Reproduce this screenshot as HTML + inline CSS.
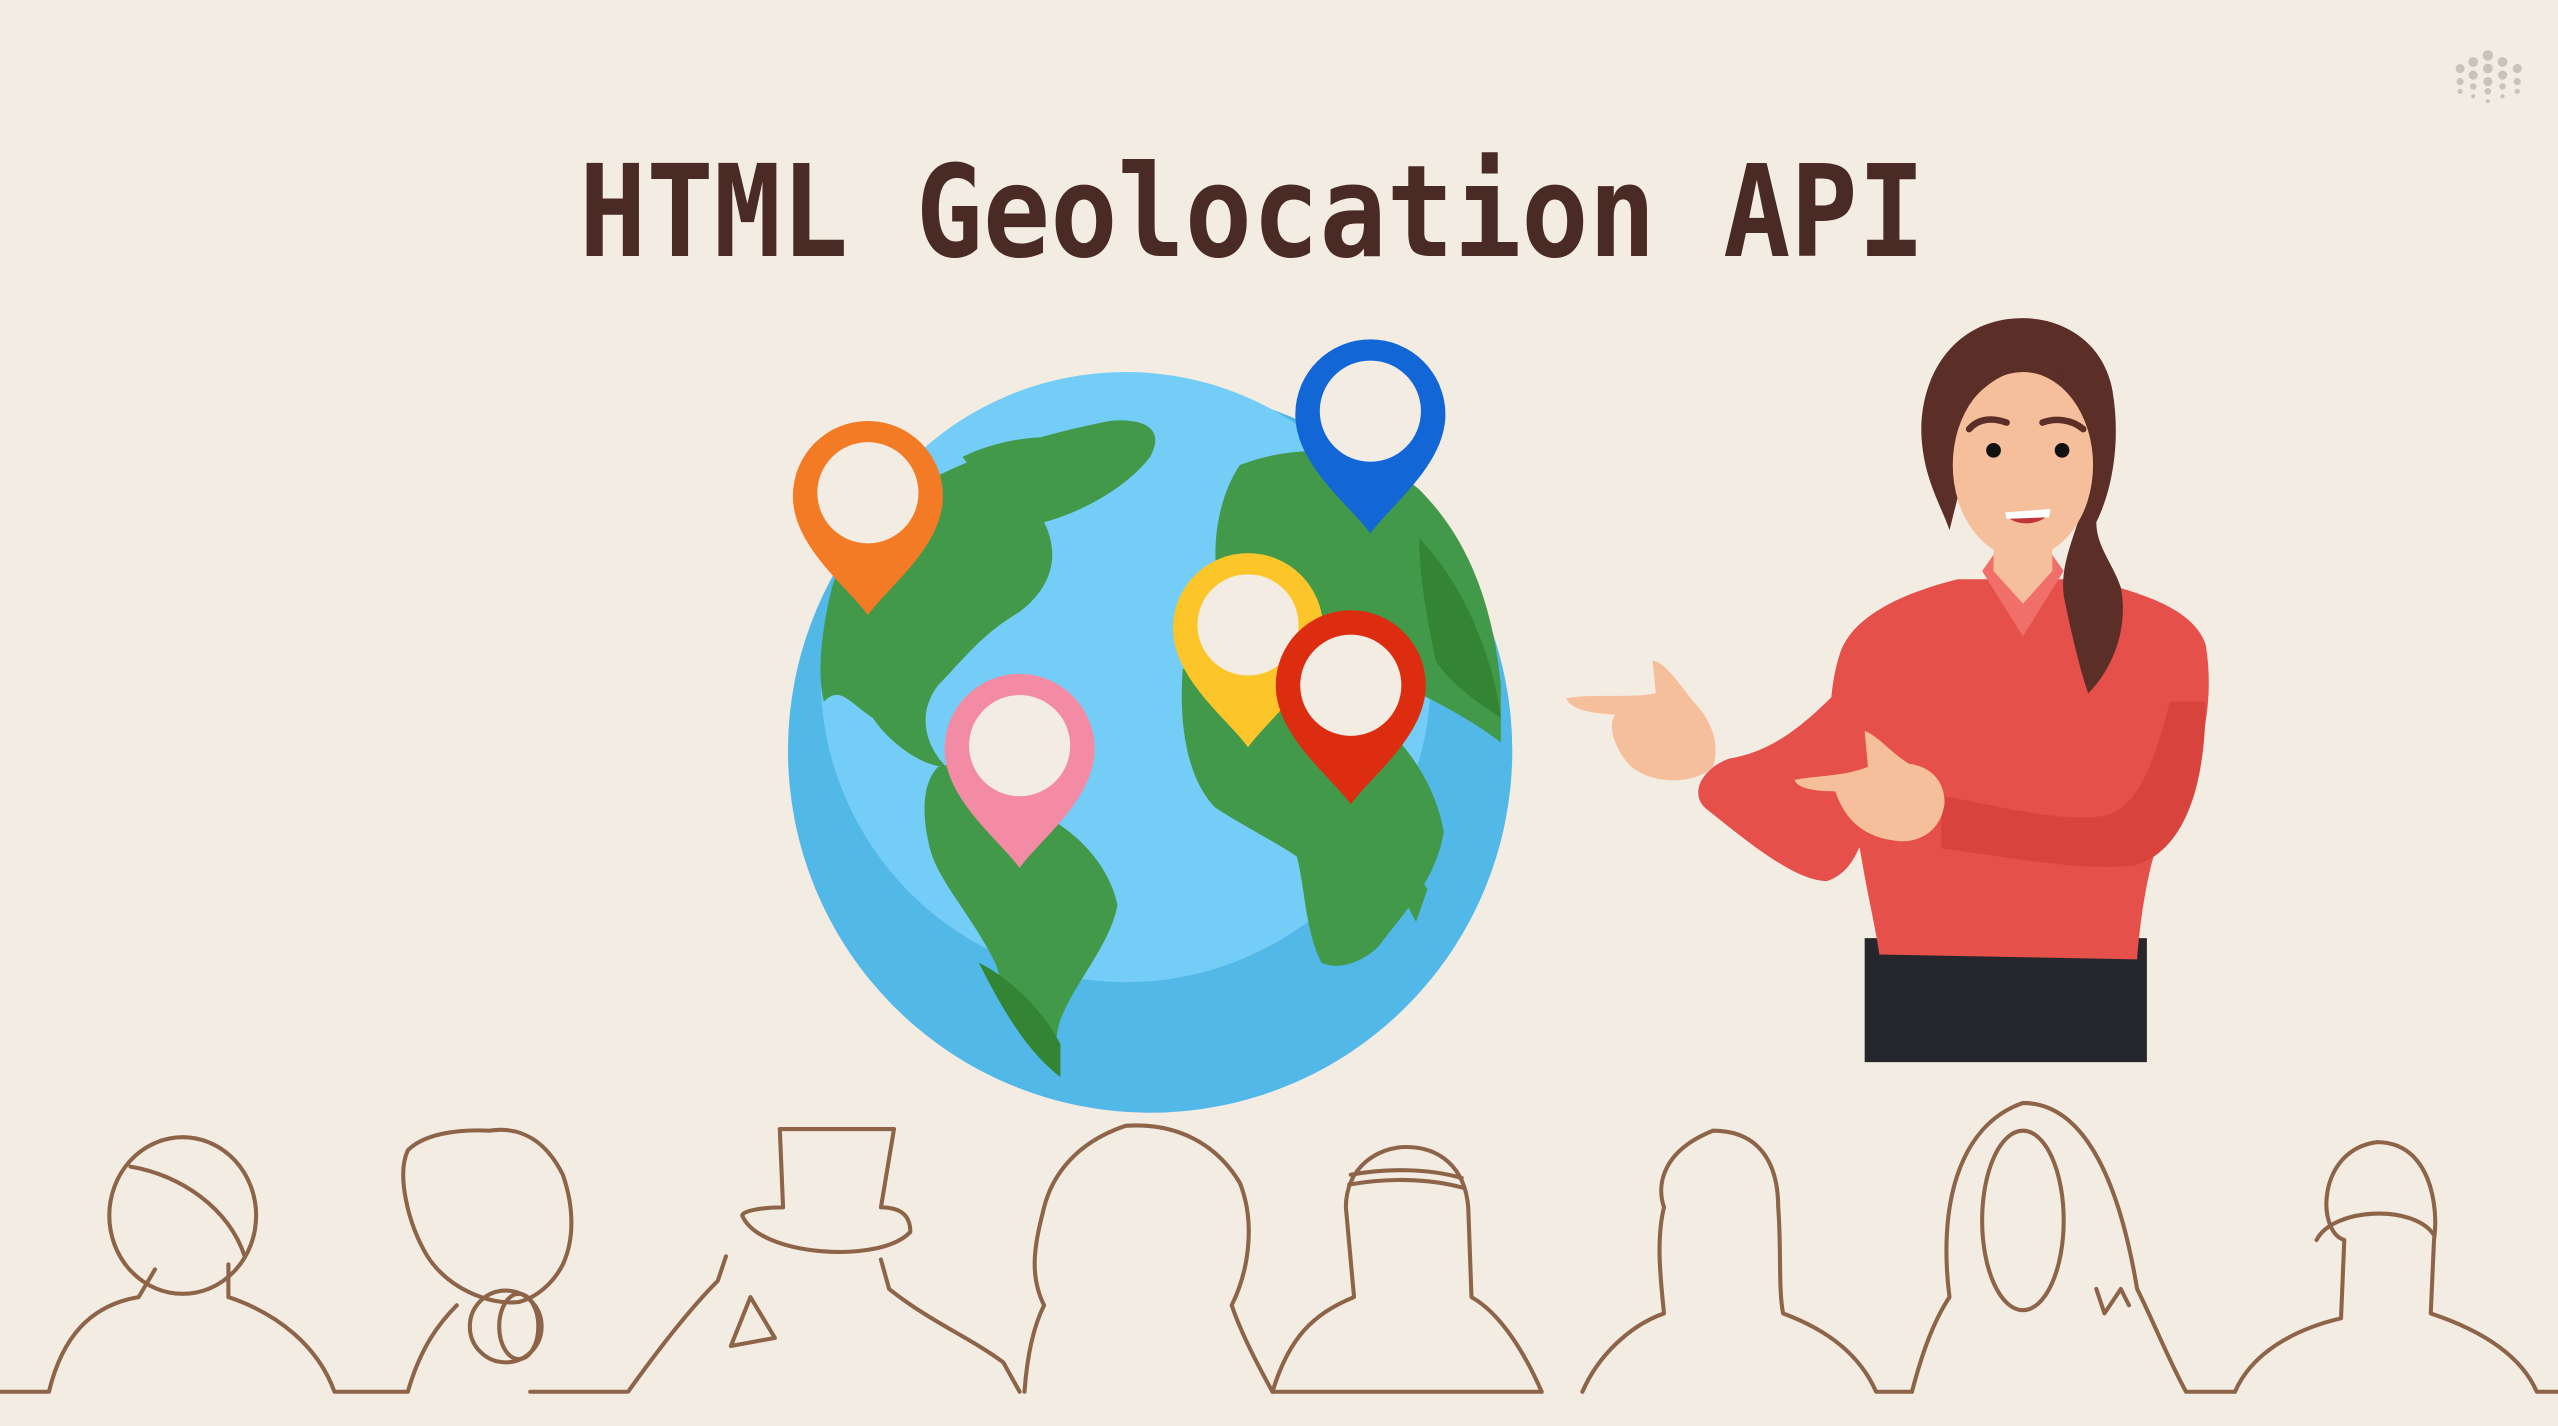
<!DOCTYPE html>
<html><head><meta charset="utf-8"><style>
html,body{margin:0;padding:0;background:#f3ece3;}
svg{display:block;}
</style></head><body>
<svg width="2558" height="1426" viewBox="0 0 1568 874" preserveAspectRatio="none" xmlns="http://www.w3.org/2000/svg">
<rect width="1568" height="874" fill="#f3ece3"/>
<g fill="#c9c3bc">
<circle cx="1525" cy="34" r="3.2"/>
<circle cx="1516" cy="38" r="3"/><circle cx="1534" cy="38" r="3"/>
<circle cx="1508" cy="42" r="2.8"/><circle cx="1525" cy="42" r="3"/><circle cx="1543" cy="42" r="2.8"/>
<circle cx="1516" cy="46" r="2.8"/><circle cx="1534" cy="46" r="2.8"/>
<circle cx="1508" cy="50" r="2.2"/><circle cx="1525" cy="50" r="2.8"/><circle cx="1543" cy="50" r="2.2"/>
<circle cx="1516" cy="53" r="2"/><circle cx="1534" cy="53" r="2"/>
<circle cx="1508" cy="56" r="1.6"/><circle cx="1525" cy="56" r="2"/><circle cx="1543" cy="56" r="1.6"/>
<circle cx="1516" cy="59" r="1.3"/><circle cx="1534" cy="59" r="1.3"/>
<circle cx="1525" cy="62" r="1.2"/>
</g>
<text x="355" y="157" font-family="DejaVu Sans Mono, monospace" font-weight="bold" font-size="78" fill="#4a2a24" textLength="825" lengthAdjust="spacingAndGlyphs">HTML Geolocation API</text>

<circle cx="705" cy="460" r="222" fill="#52b8e8"/>
<circle cx="690" cy="415" r="187" fill="#74cdf6"/>
<g fill="#43994a">
<path d="M520 330 C560 290 620 270 680 258 C700 256 715 262 705 280 C690 300 660 315 640 320 C650 340 645 360 625 375 C600 390 590 405 575 420 C560 440 570 460 580 470 C565 470 545 455 535 440 C520 430 515 420 505 430 C500 410 505 380 510 360 Z"/>
<path d="M575 470 C600 465 620 480 640 500 C660 510 680 530 685 555 C680 580 660 600 650 625 C645 640 648 655 650 660 C635 650 620 620 610 590 C595 560 575 540 570 520 C565 500 565 480 575 470 Z"/>
<path d="M590 280 C610 270 640 265 655 270 C660 285 650 300 635 305 C620 300 600 295 590 280 Z"/>
<path d="M760 285 C800 270 840 275 870 300 C900 330 915 370 920 420 L920 455 C900 440 880 430 860 420 C845 405 830 395 815 395 C800 395 790 390 775 385 C760 380 745 360 745 340 C745 320 750 300 760 285 Z"/>
<path d="M725 410 C760 400 800 410 830 430 C860 450 880 480 885 510 C880 540 860 560 845 580 C835 590 820 595 810 590 C800 570 800 545 795 525 C780 515 760 505 745 495 C730 480 722 450 725 410 Z"/>
<path d="M865 530 L875 545 L868 565 L860 550 Z"/>
</g>
<g fill="#338534">
<path d="M600 590 C620 600 640 620 650 640 L650 660 C630 645 615 620 600 590 Z"/>
<path d="M870 330 C895 355 915 400 920 440 C905 430 890 420 880 405 C875 380 870 355 870 330 Z"/>
</g>

<g>
<path d="M532 377 C520 360 486 335 486 304 A46 46 0 0 1 578 304 C578 335 544 360 532 377 Z" fill="#f47b25"/>
<circle cx="532" cy="302" r="31" fill="#f3ece3"/>
<path d="M840 327 C828 310 794 285 794 254 A46 46 0 0 1 886 254 C886 285 852 310 840 327 Z" fill="#1366d6"/>
<circle cx="840" cy="252" r="31" fill="#f3ece3"/>
<path d="M765 458 C753 441 719 416 719 385 A46 46 0 0 1 811 385 C811 416 777 441 765 458 Z" fill="#fcc52a"/>
<circle cx="765" cy="383" r="31" fill="#f3ece3"/>
<path d="M828 493 C816 476 782 451 782 420 A46 46 0 0 1 874 420 C874 451 840 476 828 493 Z" fill="#dc2d10"/>
<circle cx="828" cy="420" r="31" fill="#f3ece3"/>
<path d="M625 532 C613 515 579 490 579 459 A46 46 0 0 1 671 459 C671 490 637 515 625 532 Z" fill="#f48ba5"/>
<circle cx="625" cy="457" r="31" fill="#f3ece3"/>
</g>

<g>
<path d="M1143 575 L1316 575 L1316 651 L1143 651 Z" fill="#25262b"/>
<path d="M1200 355 C1160 365 1135 380 1128 400 C1115 440 1125 490 1140 520 C1145 550 1150 570 1152 585 L1310 588 C1312 560 1318 520 1330 500 C1350 470 1358 430 1352 395 C1345 375 1320 365 1280 355 Z" fill="#e5504a"/>
<path d="M1130 420 C1110 440 1090 460 1060 465 C1045 470 1035 485 1045 495 C1070 515 1100 540 1120 540 C1135 535 1140 520 1145 505 Z" fill="#e5504a"/>
<path d="M1330 430 C1320 470 1310 495 1290 500 C1260 505 1210 490 1190 488 L1190 520 C1230 525 1280 535 1310 530 C1340 520 1352 480 1352 430 Z" fill="#d9433e"/>
<path d="M1215 350 L1240 390 L1265 350 L1258 340 L1222 340 Z" fill="#f07069"/>
<path d="M1222 300 L1222 350 L1240 370 L1258 350 L1258 300 Z" fill="#f5bf9c"/>
<path d="M960 428 C975 425 1000 428 1015 425 L1013 405 C1020 405 1030 420 1038 430 C1048 440 1055 455 1050 470 C1040 480 1015 482 1000 470 C990 460 985 445 990 438 C975 437 963 435 960 428 Z" fill="#f5bf9c"/>
<path d="M1100 478 C1115 475 1130 476 1145 470 L1143 448 C1150 450 1160 462 1170 468 C1185 470 1192 480 1192 492 C1190 510 1175 518 1160 515 C1140 512 1130 500 1125 485 C1115 485 1102 484 1100 478 Z" fill="#f5bf9c"/>
<path d="M1240 195 C1195 195 1175 235 1178 270 C1180 295 1190 310 1195 325 L1205 285 L1280 290 C1278 320 1262 340 1265 365 C1270 390 1275 410 1280 425 C1295 410 1305 385 1300 360 C1295 345 1285 335 1285 320 C1295 300 1300 270 1295 240 C1290 210 1265 195 1240 195 Z" fill="#5b2f27"/>
<ellipse cx="1240" cy="285" rx="43" ry="57" fill="#f5bf9c"/>
<path d="M1197 275 C1200 245 1225 225 1250 225 C1265 225 1280 235 1285 255 L1292 250 C1285 220 1265 205 1240 205 C1205 205 1185 235 1190 270 Z" fill="#5b2f27"/>
<path d="M1207 263 C1213 256 1222 256 1230 259" stroke="#5b2f27" stroke-width="4" fill="none" stroke-linecap="round"/>
<path d="M1252 259 C1260 256 1270 257 1277 263" stroke="#5b2f27" stroke-width="4" fill="none" stroke-linecap="round"/>
<circle cx="1222" cy="276" r="4.5" fill="#111"/>
<circle cx="1264" cy="276" r="4.5" fill="#111"/>
<path d="M1229 315 C1240 314 1250 314 1257 312 C1255 322 1235 324 1229 315 Z" fill="#c0353a"/>
<path d="M1229 314 L1257 312 L1256 317 L1230 318 Z" fill="#fff"/>
</g>

<g fill="none" stroke="#8e6449" stroke-width="2.5" stroke-linejoin="round" stroke-linecap="round">
<path d="M0 853 L30 853 C38 820 55 800 85 795 L95 778 M140 775 L140 795 C170 805 195 825 205 853 L250 853 M250 853 C258 825 270 810 280 800"/>
<ellipse cx="112" cy="745" rx="45" ry="48"/>
<path d="M80 715 C110 720 140 740 150 770"/>
<path d="M300 693 C320 690 335 700 345 720 C352 740 352 760 345 775 C340 785 330 795 318 798 C300 800 275 790 262 770 C250 750 243 720 250 705 C260 695 280 692 300 693 Z"/>
<ellipse cx="310" cy="813" rx="22" ry="22"/>
<ellipse cx="318" cy="813" rx="12" ry="20"/>
<path d="M325 853 L385 853 C405 825 425 800 440 785 L445 770 M540 772 L545 790 C570 810 595 820 615 835 L625 853"/>
<path d="M455 745 C465 770 540 775 558 755 C558 742 548 740 540 740 L548 692 L478 692 L480 740 C468 740 455 742 455 745 Z"/>
<path d="M460 795 L448 825 L475 820 Z"/>
<path d="M628 853 C630 825 635 810 640 800 C630 780 635 760 640 740 C645 720 660 700 690 690 C720 688 745 700 760 725 C770 750 765 780 755 800 C760 815 770 835 780 853 L945 853"/>
<path d="M780 853 C790 820 805 805 830 795 L825 740 C825 715 845 703 862 703 C882 703 898 715 900 740 L902 795 C920 805 935 830 945 853"/>
<path d="M828 720 C850 716 875 716 896 722 M827 726 C850 722 875 722 897 728"/>
<path d="M970 853 C980 830 1000 812 1020 805 C1018 785 1015 760 1020 740 C1015 725 1020 705 1050 693 C1080 693 1090 715 1090 740 C1092 765 1090 790 1093 805 C1120 815 1140 830 1150 853 L1172 853"/>
<path d="M1172 853 C1178 830 1185 810 1195 795 C1188 740 1200 690 1240 676 C1280 676 1300 730 1310 790 C1320 810 1330 835 1340 853 L1370 853"/>
<ellipse cx="1240" cy="748" rx="25" ry="55"/>
<path d="M1285 790 L1290 805 L1300 790 L1305 800"/>
<path d="M1370 853 C1380 830 1405 815 1435 808 L1437 760 C1420 755 1420 705 1457 700 C1490 700 1495 740 1492 760 L1490 805 C1520 815 1545 830 1555 853 L1568 853"/>
<path d="M1420 760 C1430 740 1480 738 1492 757"/>
</g>
</svg>
</body></html>
